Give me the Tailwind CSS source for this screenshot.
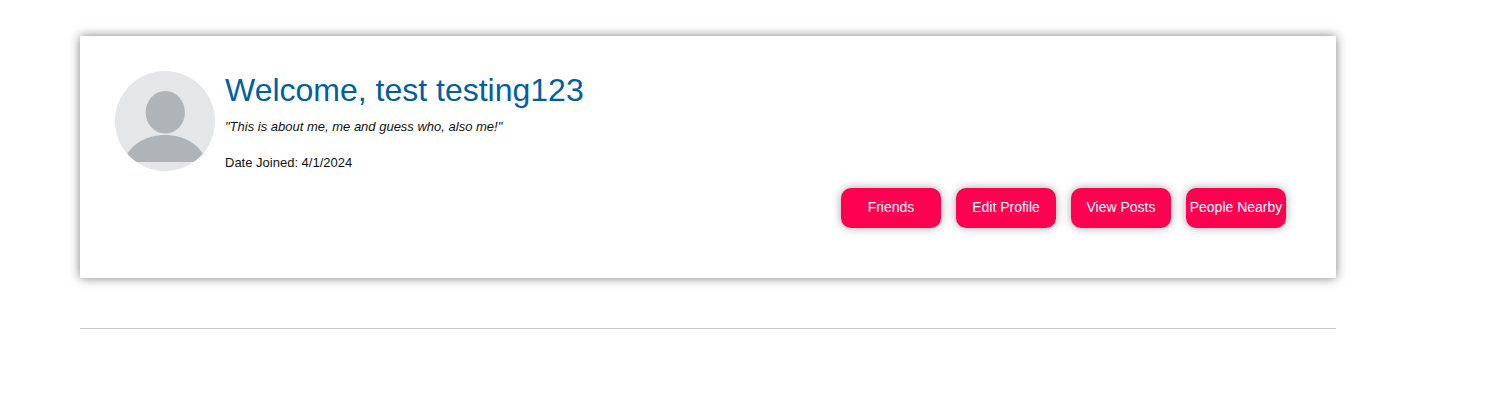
<!DOCTYPE html>
<html lang="en">
<head>
<meta charset="utf-8">
<title>Profile</title>
<script src="https://cdn.jsdelivr.net/npm/@tailwindcss/browser@4"></script>
</head>
<body class="bg-white font-['Liberation_Sans',Arial,sans-serif] text-[13px] text-[#111]">
<main class="ml-20 mr-[156px] pt-9">
  <section class="bg-white px-[35px] pt-[35px] pb-[50px] shadow-[0_0_10px_rgba(0,0,0,0.5)]">
    <div class="flex gap-[10px]">
      <svg class="size-[100px] shrink-0 rounded-full" viewBox="0 0 100 100" role="img" aria-label="Profile picture">
        <rect width="100" height="100" fill="#e4e6e7"/>
        <ellipse cx="50.300" cy="41.300" rx="19.700" ry="21.300" fill="#aeb4b7"/>
        <path d="M8 91C15 73 31 64 50 64S85 73 92 91Z" fill="#aeb4b7"/>
      </svg>
      <div>
        <h1 class="text-[32px] leading-[38px] text-[#005fa3]">Welcome, test testing123</h1>
        <p class="mt-[9px] leading-[18px] italic">"This is about me, me and guess who, also me!"</p>
        <p class="mt-[18px] leading-[18px]">Date Joined: 4/1/2024</p>
      </div>
    </div>
    <nav class="mt-[16px] mr-[15px] flex justify-end gap-[15px] text-sm text-white">
      <button class="h-10 w-[100px] rounded-[10px] bg-[#ff0050] pb-[2px] whitespace-nowrap shadow-[0_0_10px_rgba(0,0,0,0.35)]">Friends</button>
      <button class="h-10 w-[100px] rounded-[10px] bg-[#ff0050] pb-[2px] whitespace-nowrap shadow-[0_0_10px_rgba(0,0,0,0.35)]">Edit Profile</button>
      <button class="h-10 w-[100px] rounded-[10px] bg-[#ff0050] pb-[2px] whitespace-nowrap shadow-[0_0_10px_rgba(0,0,0,0.35)]">View Posts</button>
      <button class="h-10 w-[100px] rounded-[10px] bg-[#ff0050] pb-[2px] whitespace-nowrap shadow-[0_0_10px_rgba(0,0,0,0.35)]">People Nearby</button>
    </nav>
  </section>
  <hr class="mt-[50px] border-t border-[#c8c8c8]">
</main>
</body>
</html>
